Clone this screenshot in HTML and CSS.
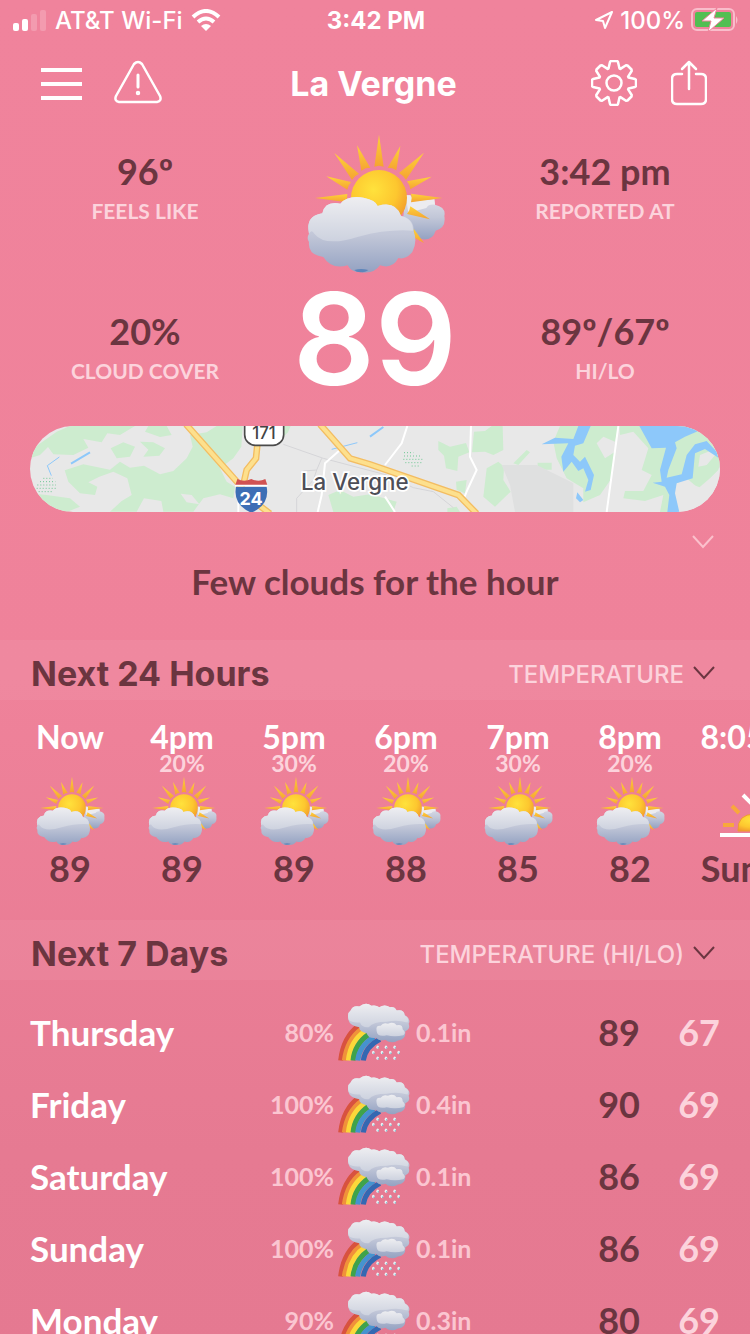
FILE: index.html
```html
<!DOCTYPE html>
<html lang="en">
<head>
    <meta charset="UTF-8">
    <meta name="viewport" content="width=device-width, initial-scale=1.0">
    <title>La Vergne - Weather</title>
    <link rel="stylesheet" href="styles.css">
</head>
<body>
    <!-- shared icons -->
    <svg class="sprite" width="0" height="0" aria-hidden="true">
        <defs>
            <radialGradient id="sun-fill" cx="0.4" cy="0.35" r="0.7">
                <stop offset="0" stop-color="#ffe23c"/>
                <stop offset="0.6" stop-color="#fdc72f"/>
                <stop offset="1" stop-color="#f29a2c"/>
            </radialGradient>
            <linearGradient id="ray-fill" x1="0" y1="0" x2="0" y2="1">
                <stop offset="0" stop-color="#fed23a"/>
                <stop offset="1" stop-color="#f5a331"/>
            </linearGradient>
            <linearGradient id="cloud-fill" x1="0" y1="0" x2="0" y2="1">
                <stop offset="0" stop-color="#dfe1ea"/>
                <stop offset="0.5" stop-color="#c2c7d8"/>
                <stop offset="1" stop-color="#94a2c2"/>
            </linearGradient>
            <linearGradient id="cloud-light" x1="0" y1="0" x2="0" y2="1">
                <stop offset="0" stop-color="#eeeef1"/>
                <stop offset="1" stop-color="#cdd2df"/>
            </linearGradient>
        </defs>
        <symbol id="icon-partly" viewBox="48 26 424 420">
            <path fill="url(#cloud-fill)" d="M352 210H366L378 222 400 228 438 222 440 238Q474 246 468 272 474 308 442 316 434 344 404 342L340 318Z"/>
            <path fill="#ececf0" d="M352 210H366L374 226 438 222 440 238Q420 236 414 248L360 262Z"/>
            <g fill="url(#ray-fill)">
                <path d="M272 28L258 124 272 121 286 124Z"/>
                <path d="M206 60L219 136 232 129 246 127Z"/>
                <path d="M336 62L298 127 312 129 324 135Z"/>
                <path d="M138 83L191 164 200 153 212 145Z"/>
                <path d="M407 82L332 143 344 152 353 163Z"/>
                <path d="M114 153L177 193 181 181 188 170Z"/>
                <path d="M430 154L356 168 363 180 366 192Z"/>
                <path d="M80 218L177 206 176 218 178 231Z"/>
                <path d="M462 218L368 205 370 218 368 231Z"/>
                <path d="M425 282L366 243 363 255 356 266Z"/>
                <path d="M407 353L376 310 374 335Z"/>
            </g>
            <circle cx="272" cy="218" r="84" fill="url(#sun-fill)"/>
            <path fill="url(#cloud-fill)" d="M62 325Q50 272 102 264 110 226 156 235 178 209 225 217 262 224 268 242 322 226 338 272 378 280 376 318 388 350 372 380 352 404 330 398 312 432 275 420 255 448 216 440 190 443 178 420 130 434 105 395 58 388 62 350 54 338 62 325Z"/>
            <path fill="url(#cloud-light)" d="M62 325Q50 272 102 264 110 226 156 235 178 209 225 217 262 224 268 242 322 226 338 272 374 280 374 316 300 310 210 334 110 366 78 325Q70 310 62 325Z"/>
            <path fill="#5d86ba" d="M198 434Q218 428 240 434 232 441 216 441 204 441 198 434Z"/>
        </symbol>
        <symbol id="icon-rainbow" viewBox="264 38 216 177">
            <g fill="none" stroke-width="15">
                <path stroke="#d8523f" d="M272 212Q280 142 326 108"/>
                <path stroke="#f0913a" d="M283 212Q292 148 334 118"/>
                <path stroke="#fbd83a" d="M295 212Q302 152 346 124"/>
                <path stroke="#3fa34a" d="M309 212Q314 162 358 132"/>
                <path stroke="#4593cf" d="M323 212Q328 168 372 141"/>
                <path stroke="#3468b2" d="M340 212Q346 170 390 148"/>
            </g>
            <path fill="url(#cloud-fill)" d="M296 92Q290 70 302 62 308 46 328 50 348 34 364 48 376 44 388 52 404 42 420 52 434 50 440 62 462 58 464 76 484 86 476 102 482 118 466 124 468 150 444 152 424 164 406 150 388 156 378 144 356 148 350 130 326 126 328 112 300 108 296 92Z"/>
            <path fill="url(#cloud-light)" d="M296 90Q290 70 302 62 308 46 328 50 348 34 364 48 376 44 388 52 404 42 420 52 434 50 440 62 462 58 464 76 480 86 472 98 440 88 410 96 370 96 356 112 336 114 330 98 306 100 296 90Z"/>
            <path fill="url(#cloud-light)" d="M380 124Q376 106 392 108 400 96 414 102 430 94 440 106 458 102 458 118 470 128 460 136 434 142 410 136 382 142 380 124Z"/>
            <g fill="#e6f3f7">
                <ellipse cx="383" cy="172" rx="4" ry="5"/><ellipse cx="408" cy="172" rx="4" ry="5"/><ellipse cx="434" cy="172" rx="4" ry="5"/>
                <ellipse cx="370" cy="188" rx="4" ry="5"/><ellipse cx="396" cy="188" rx="4" ry="5"/><ellipse cx="421" cy="188" rx="4" ry="5"/><ellipse cx="446" cy="188" rx="4" ry="5"/>
                <ellipse cx="383" cy="205" rx="4" ry="5"/><ellipse cx="408" cy="205" rx="4" ry="5"/><ellipse cx="434" cy="205" rx="4" ry="5"/>
            </g>
            <g fill="#55a5b5">
                <circle cx="385" cy="174" r="2"/><circle cx="410" cy="174" r="2"/><circle cx="436" cy="174" r="2"/><circle cx="372" cy="190" r="2"/><circle cx="398" cy="190" r="2"/><circle cx="423" cy="190" r="2"/><circle cx="448" cy="190" r="2"/><circle cx="385" cy="207" r="2"/><circle cx="410" cy="207" r="2"/><circle cx="436" cy="207" r="2"/>
            </g>
        </symbol>
        <symbol id="icon-sunset" viewBox="0 0 70 70">
            <path fill="url(#sun-fill)" stroke="#ee9a35" d="M18 55Q17 38 35 38T52 55Z"/>
            <path stroke="#f8a83c" stroke-width="4" d="M3 49H14M12 30L19 37M56 49H67M58 30L51 37"/>
            <path fill="none" stroke="#fff" stroke-width="4" d="M23 19L35 31 47 19M35 31V6M0 59H70"/>
        </symbol>
        <symbol id="icon-chevron" viewBox="0 0 22 14">
            <path fill="none" stroke="currentColor" stroke-width="2" d="M1 1L11 12 21 1"/>
        </symbol>
    </svg>

    <div class="status-bar">
        <div class="status-left">
            <svg width="34" height="22" viewBox="0 0 34 22" fill="#fff">
                <rect x="0" y="14" width="6" height="8" rx="2"/>
                <rect x="9" y="10" width="6" height="12" rx="2"/>
                <rect x="18" y="5" width="6" height="17" rx="2" opacity="0.2"/>
                <rect x="27" y="1" width="6" height="21" rx="2" opacity="0.2"/>
            </svg>
            <span>AT&amp;T Wi-Fi</span>
            <svg width="30" height="22" viewBox="0 0 30 22">
                <path fill="none" stroke="#fff" stroke-width="4" d="M2 8Q15 -4 28 8M7 13Q15 6 23 13"/>
                <path fill="#fff" d="M10 17Q15 13 20 17L15 22Z"/>
            </svg>
        </div>
        <div class="status-time">3:42 PM</div>
        <div class="status-right">
            <svg width="20" height="20" viewBox="0 0 20 20" fill="none" stroke="#fff" stroke-width="2" stroke-linejoin="round">
                <path d="M18 2L2 10 9 11 11 18Z"/>
            </svg>
            <span>100%</span>
            <svg width="48" height="24" viewBox="0 0 48 24">
                <rect x="1" y="1" width="42" height="21" rx="5" fill="none" stroke="#f9bdcb" stroke-width="2"/>
                <rect x="4" y="4" width="36" height="15" rx="2" fill="#52bf52"/>
                <path fill="#f9bdcb" d="M45 8Q48 12 45 16Z"/>
                <path fill="#fff" stroke="#ef829b" stroke-width="1" d="M26 0L11 13H20L17 24 33 10H23Z"/>
            </svg>
        </div>
    </div>

    <header class="nav">
        <div class="nav-left">
            <button class="icon-btn" aria-label="Menu">
                <svg width="42" height="46" viewBox="0 0 42 46" stroke="#fff" stroke-width="4">
                    <path d="M1 10H42M1 24H42M1 38H42"/>
                </svg>
            </button>
            <button class="icon-btn" aria-label="Alerts">
                <svg width="48" height="46" viewBox="0 0 48 46" fill="none" stroke="#fff" stroke-width="2.5" stroke-linejoin="round" stroke-linecap="round">
                    <path d="M20 4Q24 0 28 4L46 36Q48 41 43 42H5Q0 41 2 36Z"/>
                    <path stroke-width="3" d="M24 15V27"/>
                    <circle cx="24" cy="33" r="1"/>
                </svg>
            </button>
        </div>
        <h1>La Vergne</h1>
        <div class="nav-right">
            <button class="icon-btn" aria-label="Settings">
                <svg width="46" height="46" viewBox="0 0 46 46" fill="none" stroke="#fff" stroke-width="2.5" stroke-linejoin="round">
                    <path d="M17.5 8.5L19 2Q19.5 1 20.5 1H25.5Q26.5 1 27 2L28.5 8.5 29.4 8.9 35 5.3 36.5 5.5 40.5 9.5 40.7 11 37.1 16.6 37.5 17.5 44 19Q45 19.5 45 20.5V25.5Q45 26.5 44 27L37.5 28.5 37.1 29.4 40.7 35 40.5 36.5 36.5 40.5 35 40.7 29.4 37.1 28.5 37.5 27 44Q26.5 45 25.5 45H20.5Q19.5 45 19 44L17.5 37.5 16.6 37.1 11 40.7 9.5 40.5 5.5 36.5 5.3 35 8.9 29.4 8.5 28.5 2 27Q1 26.5 1 25.5V20.5Q1 19.5 2 19L8.5 17.5 8.9 16.6 5.3 11 5.5 9.5 9.5 5.5 11 5.3 16.6 8.9Z"/>
                    <circle cx="23" cy="23" r="7.5"/>
                </svg>
            </button>
            <button class="icon-btn" aria-label="Share">
                <svg width="36" height="46" viewBox="0 0 36 46" fill="none" stroke="#fff" stroke-width="2.5" stroke-linecap="round" stroke-linejoin="round">
                    <path d="M11 14H6Q1 14 1 19V39Q1 44 6 44H30Q35 44 35 39V19Q35 14 30 14H25"/>
                    <path d="M18 29V2M11 9L18 2 25 9"/>
                </svg>
            </button>
        </div>
    </header>

    <main>
        <section class="current">
            <div class="stats">
                <div class="stat">
                    <div class="stat-value">96º</div>
                    <div class="stat-label">FEELS LIKE</div>
                </div>
                <div class="stat">
                    <div class="stat-value">20%</div>
                    <div class="stat-label">CLOUD COVER</div>
                </div>
            </div>
            <div class="now">
                <svg class="now-icon"><use href="#icon-partly"/></svg>
                <div class="now-temp">89</div>
            </div>
            <div class="stats">
                <div class="stat">
                    <div class="stat-value">3:42 pm</div>
                    <div class="stat-label">REPORTED AT</div>
                </div>
                <div class="stat">
                    <div class="stat-value">89º/67º</div>
                    <div class="stat-label">HI/LO</div>
                </div>
            </div>
        </section>

        <a href="#map" class="map" id="map">
            <svg viewBox="30 33 2070 258" preserveAspectRatio="xMidYMid slice">
                <rect x="30" y="33" width="2070" height="258" fill="#e8e8e8"/>
                <!-- woods -->
                <g fill="#cdeccf">
                    <path d="M40 100L110 50 150 33H345L300 60 262 55 245 82 190 72 205 98 160 120 100 118 84 96 60 120 30 130Z"/>
                    <path d="M385 33L375 50 420 66 455 60 440 33ZM272 100L310 82 345 95 330 125 290 130ZM360 80L400 82 435 100 418 122 370 125 385 104Z"/>
                    <path d="M510 60L560 52 590 33H668L664 95 640 130 600 160 620 200 645 215 640 250 600 238 550 250 520 290H430L424 258 372 250 350 290H270L305 258 335 240 322 190 280 170 238 185 205 202 232 215 225 240 180 235 145 200 134 166 190 148 270 164 300 140 330 158 372 152 420 178 460 168 500 130 518 95Z"/>
                    <path d="M30 235L80 240 150 250 180 275 140 291H90ZM765 33H812L804 52 790 65ZM925 240L960 225 1000 245 1050 238 1130 260 1120 291H940Z"/>
                </g>
                <path fill="#e8e8e8" d="M482 236L515 240 538 268 500 262Z"/>
                <g fill="#cdeccf" transform="translate(1050 0)">
                    <path d="M205 78L240 95 288 84 298 112 265 125 262 168 228 160 222 122 205 105ZM312 50L345 48 365 33H398L400 105 370 120 345 110 306 112ZM430 145L470 105 480 112 445 150ZM503 143H545V164H503ZM350 160L385 140 402 155 400 195 422 230 375 275 340 245ZM258 200L290 195 285 235 260 225ZM232 280L260 275 270 291H232Z"/>
                    <path d="M570 33H745L735 80 700 65 680 85 705 130 735 110 725 190 690 240 640 262 640 220 590 190 560 130 550 80ZM748 33H1050V150L1020 235 985 215 940 200 915 220 905 291H870L880 240 825 258 760 250 765 228 820 228 845 180 815 165 835 100 790 50 750 60Z"/>
                </g>
                <g fill="#e8e8e8" transform="translate(1050 0)">
                    <path d="M990 120L1020 108 1040 115 1010 150 985 155ZM910 210L950 190 985 220 1020 190 1050 160V250L970 291H920Z"/>
                </g>
                <path fill="#dfe0e0" d="M1445 150L1550 150 1600 175 1660 205V291H1485L1470 210Z"/>
                <!-- water -->
                <g fill="#8dc8fa" transform="translate(1050 0)">
                    <path d="M515 88L555 68 610 72 625 33H662L640 85 615 92 610 120 630 140 645 125 672 180 662 225 645 230 655 195 640 160 625 168 605 140 580 170 574 125 595 85ZM622 232L640 255 630 262 618 250Z"/>
                    <path d="M808 33H960L985 48 945 65 915 82 920 100 895 165 890 188 935 178 950 120 975 88 1010 78 1040 110 1045 128 1005 102 975 115 968 190 920 205 915 235 928 291H892L898 240 885 215 848 203 875 200 870 165 888 98 845 100Z"/>
                </g>
                <g fill="none" stroke="#8dc8fa" stroke-width="4">
                    <path stroke-width="6" d="M153 146L210 112M1050 65L1090 36"/>
                    <path stroke-width="3" d="M118 126L82 152 94 182M935 103L1012 83"/>
                </g>
                <!-- parks -->
                <g fill="none" stroke="#6fc793" stroke-width="3" stroke-dasharray="3 6">
                    <path d="M70 190H98M60 200H106M52 210H108M50 220H108M56 230H98M1152 113H1180M1152 123H1206M1150 133H1210M1156 143H1205M1175 153H1200"/>
                </g>
                <!-- streets -->
                <g fill="none" stroke="#d5d5d8" stroke-width="3">
                    <path d="M790 88L910 130 1100 180 1180 218 1240 230 1300 278M905 130L890 165 850 168M890 165L880 195 830 250V291"/>
                </g>
                <g fill="none" stroke="#fff" stroke-width="6">
                    <path d="M960 105L915 145 905 240 893 291M1162 33L1145 85 1095 150M1353 33L1350 125 1370 165 1342 225 1334 245M1795 33L1760 291M1095 245L1125 291M655 250V291"/>
                </g>
                <!-- highways -->
                <g fill="none" stroke="#f3bd62" stroke-width="20">
                    <path d="M498 28L655 205 690 250 750 296M715 60L708 130 680 165 672 200M900 28L990 130 1050 148 1315 240 1370 296"/>
                </g>
                <g fill="none" stroke="#fde08d" stroke-width="12">
                    <path d="M498 28L655 205 690 250 750 296M715 60L708 130 680 165 672 200M900 28L990 130 1050 148 1315 240 1370 296"/>
                </g>
                <rect x="674" y="0" width="117" height="91" rx="32" fill="#fff" stroke="#4a4a4a" stroke-width="5"/>
                <text class="map-route" x="732" y="73">171</text>
                <path fill="#3d6eb5" d="M648 215H740Q750 270 694 293 638 270 648 215Z"/>
                <path fill="#d15252" d="M652 192Q672 202 694 192 716 202 736 192L742 210H646Z"/>
                <path stroke="#fff" stroke-width="5" d="M645 212H743"/>
                <text class="map-shield" x="693" y="269">24</text>
                <text class="map-city" x="843" y="224">La Vergne</text>
            </svg>
        </a>

        <div class="expand-row">
            <button class="icon-btn expand" aria-label="Show more">
                <svg class="chevron"><use href="#icon-chevron"/></svg>
            </button>
        </div>
        <p class="summary">Few clouds for the hour</p>

        <section>
            <div class="section-head">
                <h2>Next 24 Hours</h2>
                <label class="picker">
                    <select aria-label="Hourly data">
                        <option>TEMPERATURE</option>
                        <option>WIND</option>
                    </select>
                    <svg class="chevron"><use href="#icon-chevron"/></svg>
                </label>
            </div>
            <div class="hours">
                <div class="hour">
                    <div class="hour-time">Now</div>
                    <div class="hour-rain"></div>
                    <svg class="hour-icon"><use href="#icon-partly"/></svg>
                    <div class="hour-temp">89</div>
                </div>
                <div class="hour">
                    <div class="hour-time">4pm</div>
                    <div class="hour-rain">20%</div>
                    <svg class="hour-icon"><use href="#icon-partly"/></svg>
                    <div class="hour-temp">89</div>
                </div>
                <div class="hour">
                    <div class="hour-time">5pm</div>
                    <div class="hour-rain">30%</div>
                    <svg class="hour-icon"><use href="#icon-partly"/></svg>
                    <div class="hour-temp">89</div>
                </div>
                <div class="hour">
                    <div class="hour-time">6pm</div>
                    <div class="hour-rain">20%</div>
                    <svg class="hour-icon"><use href="#icon-partly"/></svg>
                    <div class="hour-temp">88</div>
                </div>
                <div class="hour">
                    <div class="hour-time">7pm</div>
                    <div class="hour-rain">30%</div>
                    <svg class="hour-icon"><use href="#icon-partly"/></svg>
                    <div class="hour-temp">85</div>
                </div>
                <div class="hour">
                    <div class="hour-time">8pm</div>
                    <div class="hour-rain">20%</div>
                    <svg class="hour-icon"><use href="#icon-partly"/></svg>
                    <div class="hour-temp">82</div>
                </div>
                <div class="hour hour-sunset">
                    <div class="hour-time">8:05pm</div>
                    <div class="hour-rain"></div>
                    <svg class="hour-icon"><use href="#icon-sunset"/></svg>
                    <div class="hour-temp">Sunset</div>
                </div>
            </div>
        </section>

        <section>
            <div class="section-head">
                <h2>Next 7 Days</h2>
                <label class="picker">
                    <select aria-label="Daily data">
                        <option>TEMPERATURE (HI/LO)</option>
                        <option>WIND</option>
                    </select>
                    <svg class="chevron"><use href="#icon-chevron"/></svg>
                </label>
            </div>
            <table class="days">
                <tr>
                    <th class="day-name" scope="row">Thursday</th>
                    <td class="day-rain">80%</td>
                    <td class="day-icon"><svg><use href="#icon-rainbow"/></svg></td>
                    <td class="day-amount">0.1in</td>
                    <td class="day-hi">89</td>
                    <td class="day-lo">67</td>
                </tr>
                <tr>
                    <th class="day-name" scope="row">Friday</th>
                    <td class="day-rain">100%</td>
                    <td class="day-icon"><svg><use href="#icon-rainbow"/></svg></td>
                    <td class="day-amount">0.4in</td>
                    <td class="day-hi">90</td>
                    <td class="day-lo">69</td>
                </tr>
                <tr>
                    <th class="day-name" scope="row">Saturday</th>
                    <td class="day-rain">100%</td>
                    <td class="day-icon"><svg><use href="#icon-rainbow"/></svg></td>
                    <td class="day-amount">0.1in</td>
                    <td class="day-hi">86</td>
                    <td class="day-lo">69</td>
                </tr>
                <tr>
                    <th class="day-name" scope="row">Sunday</th>
                    <td class="day-rain">100%</td>
                    <td class="day-icon"><svg><use href="#icon-rainbow"/></svg></td>
                    <td class="day-amount">0.1in</td>
                    <td class="day-hi">86</td>
                    <td class="day-lo">69</td>
                </tr>
                <tr>
                    <th class="day-name" scope="row">Monday</th>
                    <td class="day-rain">90%</td>
                    <td class="day-icon"><svg><use href="#icon-rainbow"/></svg></td>
                    <td class="day-amount">0.3in</td>
                    <td class="day-hi">80</td>
                    <td class="day-lo">69</td>
                </tr>
            </table>
        </section>
    </main>
</body>
</html>
```
FILE: styles.css
```css
* {
    box-sizing: border-box;
}
html {
    background: linear-gradient(#f0839c 0%, #ef829a 50%, #e67a92 85%, #e57991 100%);
    scrollbar-width: none;
}
body {
    margin: 0;
    font-family: Lato, "Liberation Sans", sans-serif;
    font-weight: 700;
    color: #6b3540;
}
.sprite {
    display: block;
}
svg {
    display: block;
}
.status-bar, .nav {
    display: grid;
    grid-template-columns: 1fr auto 1fr;
    align-items: center;
    font-family: Inter, sans-serif;
    color: white;
}
.status-bar {
    height: 40px;
    padding: 0 11px 0 13px;
    font-size: 24px;
    font-weight: 500;
}
.status-left, .status-right {
    display: flex;
    align-items: center;
    gap: 8px;
}
.status-right {
    justify-content: flex-end;
    gap: 6px;
}
.status-time {
    font-weight: 700;
}
.nav {
    height: 86px;
    padding: 0 43px 0 40px;
}
.nav h1 {
    margin: 0;
    font-size: 34px;
}
.nav-left, .nav-right {
    display: flex;
    gap: 32px;
}
.nav-right {
    justify-content: flex-end;
    gap: 34px;
}
.icon-btn {
    padding: 0;
    border: none;
    background: none;
    color: inherit;
    cursor: pointer;
}
.current {
    display: grid;
    grid-template-columns: 1fr 1fr 1fr;
    padding: 0 30px;
    height: 300px;
    text-align: center;
}
.stats {
    padding-top: 25px;
}
.stat {
    height: 160px;
    line-height: 40px;
}
.stat-value {
    font-size: 36px;
}
.stat-label {
    font-size: 21px;
    color: #fcd3dc;
}
.now {
    padding-top: 8px;
}
.now-icon {
    width: 142px;
    height: 140px;
    margin: 0 auto;
}
.now-temp {
    font-family: Inter, sans-serif;
    font-size: 128px;
    font-weight: 600;
    line-height: 130px;
    color: white;
}
.map {
    display: block;
    height: 86px;
    margin: 0 30px;
    border-radius: 43px;
    overflow: hidden;
}
.map svg {
    width: 100%;
    height: 100%;
}
.map text {
    font-family: Inter, sans-serif;
}
.map-city {
    font-size: 67px;
    font-weight: 500;
    fill: #4d4e57;
    stroke: white;
    stroke-width: 10px;
    paint-order: stroke;
}
.map-route {
    font-size: 50px;
    font-weight: 500;
    fill: #444;
    text-anchor: middle;
}
.map-shield {
    font-size: 54px;
    font-weight: 700;
    fill: white;
    text-anchor: middle;
}
.chevron {
    width: 22px;
    height: 14px;
}
.expand-row {
    display: flex;
    justify-content: flex-end;
    height: 50px;
    padding: 10px 36px 0;
}
.expand {
    height: 40px;
    color: #fbc0cc;
}
.summary {
    margin: 0;
    height: 78px;
    font-size: 35px;
    line-height: 38px;
    text-align: center;
}
.section-head {
    display: flex;
    justify-content: space-between;
    align-items: center;
    height: 60px;
    padding: 6px 35px 0 31px;
    background-color: rgba(255, 255, 255, 0.05);
    font-family: Inter, sans-serif;
}
.section-head h2 {
    margin: 0;
    font-size: 34px;
}
.picker {
    display: flex;
    align-items: center;
    gap: 9px;
}
.picker select {
    appearance: none;
    padding: 2px 0 0;
    border: none;
    background: none;
    font-family: inherit;
    font-size: 24px;
    font-weight: 500;
    text-align-last: right;
    color: #fcd3dc;
}
.hours {
    display: flex;
    height: 220px;
    padding: 20px 14px 0;
    overflow-x: auto;
    scrollbar-width: none;
    text-align: center;
}
.hour {
    flex: 0 0 112px;
}
.hour-sunset {
    flex-basis: 138px;
}
.hour-time {
    font-size: 32px;
    line-height: 34px;
    color: white;
}
.hour-rain {
    height: 22px;
    font-size: 23px;
    line-height: 18px;
    color: #fcd3dc;
}
.hour-icon {
    width: 70px;
    height: 70px;
    margin: 0 auto;
}
.hour-temp {
    font-size: 36px;
    line-height: 44px;
}
.days {
    width: 100%;
    margin-top: 16px;
    padding: 0 30px;
    border-spacing: 0;
    table-layout: fixed;
    font-size: 36px;
}
.days td, .days th {
    height: 72px;
    padding: 0;
}
.days .day-name {
    width: 30%;
    font-size: 35px;
    text-align: left;
    color: white;
}
.days .day-rain {
    padding-right: 4px;
    font-size: 25px;
    text-align: right;
    color: #fbc6d1;
}
.day-icon {
    width: 72px;
}
.day-icon svg {
    width: 72px;
    height: 60px;
}
.days .day-amount {
    width: 150px;
    padding-left: 6px;
    font-size: 25px;
    color: #fbc6d1;
}
.day-hi, .day-lo {
    width: 80px;
    text-align: right;
}
.day-lo {
    color: #fcd3dc;
}
```
